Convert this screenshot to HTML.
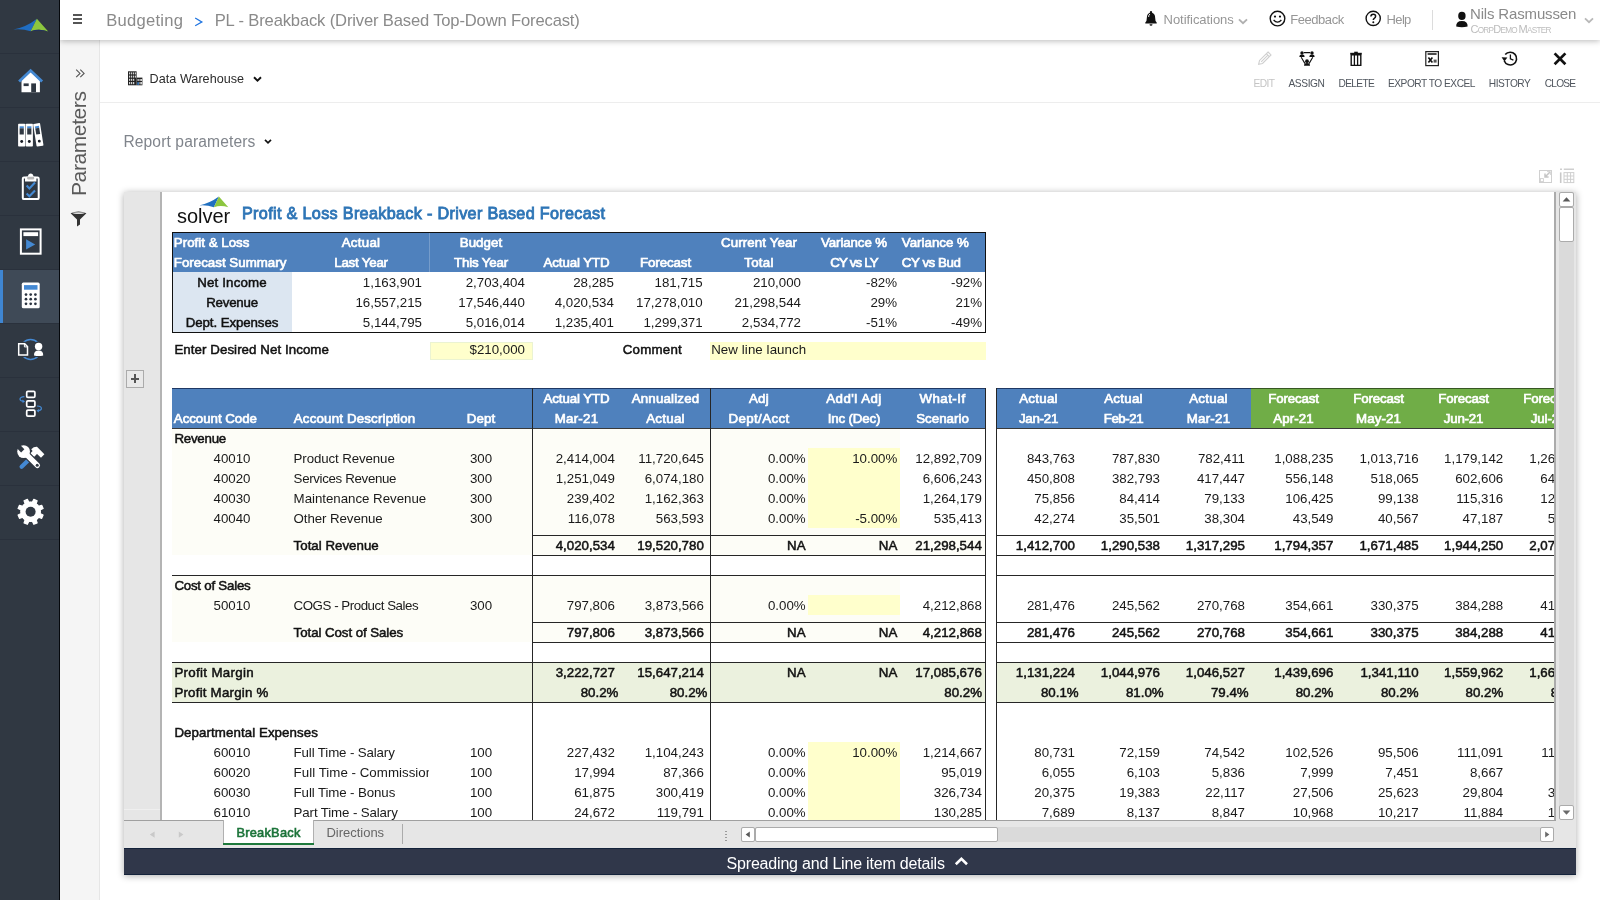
<!DOCTYPE html>
<html lang="en">
<head>
<meta charset="utf-8">
<title>PL - Breakback (Driver Based Top-Down Forecast)</title>
<style>
html,body{margin:0;padding:0;}
body{width:1600px;height:900px;overflow:hidden;background:#fff;position:relative;font-family:"Liberation Sans",sans-serif;}
div,svg,span{position:absolute;box-sizing:border-box;}
.t{white-space:nowrap;overflow:visible;}
#sheetclip{left:162px;top:192px;width:1392px;height:628px;overflow:hidden;background:#fff;}
#sheetin{left:-162px;top:-192px;width:1600px;height:900px;}
</style>
</head>
<body>
<div id="root" style="left:0;top:0;width:1600px;height:900px;will-change:transform">
<div style="left:60px;top:40px;width:40px;height:860px;background:#f5f5f5;border-right:1px solid #e6e6e6;"></div>
<svg style="left:74px;top:68px" width="12" height="11" viewBox="0 0 12 11"><path d="M2.2,1.6 L6,5.4 L2.2,9.2 M6.3,1.6 L10.1,5.4 L6.3,9.2" fill="none" stroke="#555" stroke-width="1.1"/></svg>
<div class="t" style="left:68px;top:195.6px;width:104px;height:22px;line-height:22px;font-size:21px;color:#5a5a5a;transform-origin:0 0;transform:rotate(-90deg);letter-spacing:-0.4px">Parameters</div>
<svg style="left:70px;top:211px" width="17" height="16" viewBox="0 0 17 16"><path d="M0.6,2.2 Q8.5,-1 16.4,2.2 L10,8.6 L10,13.4 L7,15.4 L7,8.6 Z" fill="#333"/><ellipse cx="8.5" cy="2.1" rx="6.2" ry="0.9" fill="#ddd"/></svg>
<svg style="left:127px;top:71px" width="16" height="15" viewBox="0 0 16 15"><rect x="1" y="0.3" width="8.6" height="14" fill="#222"/><rect x="9.6" y="6.6" width="5.8" height="7.7" fill="#222"/><g fill="#fff"><rect x="2.2" y="1.4" width="1" height="2"/><rect x="4.2" y="1.4" width="1" height="2"/><rect x="6.2" y="1.4" width="1" height="2"/><rect x="8.0" y="1.4" width="0.8" height="2"/><rect x="2.2" y="4.6" width="1" height="2"/><rect x="4.2" y="4.6" width="1" height="2"/><rect x="6.2" y="4.6" width="1" height="2"/><rect x="8.0" y="4.6" width="0.8" height="2"/><rect x="2.2" y="7.8" width="1" height="2"/><rect x="4.2" y="7.8" width="1" height="2"/><rect x="6.2" y="7.8" width="1" height="2"/><rect x="2.2" y="11" width="1" height="2.2"/><rect x="4.2" y="11" width="1" height="2.2"/><rect x="6.2" y="11" width="1" height="2.2"/><rect x="10.6" y="8" width="1" height="2"/><rect x="12.6" y="8" width="1" height="2"/><rect x="14" y="8" width="0.8" height="2"/><rect x="12.6" y="11" width="1" height="2.4"/><rect x="14" y="11" width="0.8" height="2.4"/></g><rect x="10.4" y="11.2" width="1.4" height="2.6" fill="#3b8be0"/></svg>
<div class="t" style="left:149.3px;top:69px;width:150.7px;height:20px;line-height:20px;font-size:12.6px;color:#2b2b2b;letter-spacing:0.037px;text-align:left;padding-left:0.3px;">Data Warehouse</div>
<svg style="left:252px;top:75px" width="11" height="8" viewBox="0 0 11 8"><path d="M2,2.2 L5.5,5.6 L9,2.2" fill="none" stroke="#111" stroke-width="1.9"/></svg>
<div style="left:100px;top:102px;width:1500px;height:1px;background:#ededed;"></div>
<div class="t" style="left:122.8px;top:131px;width:277.2px;height:22px;line-height:22px;font-size:15.6px;color:#80858c;letter-spacing:0.120px;text-align:left;padding-left:0.6px;">Report parameters</div>
<svg style="left:263px;top:138px" width="10" height="7" viewBox="0 0 10 7"><path d="M2,1.9 L5,4.8 L8,1.9" fill="none" stroke="#111" stroke-width="1.7"/></svg>
<svg style="left:1254px;top:49px" width="20" height="20" viewBox="0 0 20 20"><g transform="rotate(45 10 10)" fill="none" stroke="#cfcfcf" stroke-width="1.1"><path d="M7.9,2.2 h4.2 v12 l-2.1,3.4 l-2.1,-3.4 Z"/><path d="M7.9,4.6 h4.2 M10,4.8 V14"/></g></svg>
<div class="t" style="left:1204px;top:75px;width:120px;height:18px;line-height:18px;font-size:10.2px;color:#c4c4c4;letter-spacing:-0.533px;text-align:center;">EDIT</div>
<svg style="left:1296.5px;top:49px" width="20" height="20" viewBox="0 0 20 20"><g fill="#111"><circle cx="5" cy="4" r="1.7"/><path d="M2.4,8 q0,-2.4 2.6,-2.4 q2.6,0 2.6,2.4 Z"/><circle cx="15" cy="4" r="1.7"/><path d="M12.4,8 q0,-2.4 2.6,-2.4 q2.6,0 2.6,2.4 Z"/><circle cx="10" cy="12.2" r="1.9"/><path d="M7,16.8 q0,-2.8 3,-2.8 q3,0 3,2.8 Z"/></g><path d="M6.8,3.6 H13.2 M4.2,8.2 L8,14.6 M15.8,8.2 L12,14.6" stroke="#111" stroke-width="1.1" fill="none"/></svg>
<div class="t" style="left:1246.5px;top:75px;width:120.0px;height:18px;line-height:18px;font-size:10.2px;color:#50565e;letter-spacing:-0.407px;text-align:center;">ASSIGN</div>
<svg style="left:1346.3px;top:49px" width="20" height="20" viewBox="0 0 20 20"><g fill="none" stroke="#111"><path d="M5.2,5.8 h9.6 v10.6 h-9.6 Z" stroke-width="1.4"/><path d="M8.4,6 v10 M11.6,6 v10" stroke-width="1.3"/><path d="M4.2,4.6 h11.6" stroke-width="1.6"/><path d="M8.2,3.4 h3.6" stroke-width="1.4"/></g></svg>
<div class="t" style="left:1296.3px;top:75px;width:120.0px;height:18px;line-height:18px;font-size:10.2px;color:#50565e;letter-spacing:-0.680px;text-align:center;">DELETE</div>
<svg style="left:1421.5px;top:49px" width="20" height="20" viewBox="0 0 20 20"><rect x="3.8" y="2.6" width="12.6" height="14" fill="none" stroke="#222" stroke-width="1.2"/><path d="M5.6,5 h9" stroke="#111" stroke-width="1.5"/><path d="M6.4,8.6 l4,5 M10.4,8.6 l-4,5" stroke="#111" stroke-width="1.6"/><rect x="11.6" y="10.6" width="3" height="3" fill="#555"/></svg>
<div class="t" style="left:1371.5px;top:75px;width:120.0px;height:18px;line-height:18px;font-size:10.2px;color:#50565e;letter-spacing:-0.492px;text-align:center;">EXPORT TO EXCEL</div>
<svg style="left:1499.6px;top:49px" width="20" height="20" viewBox="0 0 20 20"><path d="M4.2,11.8 A6.4,6.4 0 1 0 5.2,5.6" fill="none" stroke="#111" stroke-width="1.6"/><path d="M1.6,8.2 L4.4,12.6 L7.4,8.6 Z" fill="#111"/><path d="M10.4,5.6 V9.8 L13.4,11.2" fill="none" stroke="#111" stroke-width="1.3"/></svg>
<div class="t" style="left:1449.6px;top:75px;width:120.0px;height:18px;line-height:18px;font-size:10.2px;color:#50565e;letter-spacing:-0.481px;text-align:center;">HISTORY</div>
<svg style="left:1550px;top:49px" width="20" height="20" viewBox="0 0 20 20"><path d="M4.6,4.4 L15.4,15.2 M15.4,4.4 L4.6,15.2" stroke="#111" stroke-width="2.7" fill="none"/></svg>
<div class="t" style="left:1500px;top:75px;width:120px;height:18px;line-height:18px;font-size:10.2px;color:#50565e;letter-spacing:-0.796px;text-align:center;">CLOSE</div>
<svg style="left:1538px;top:169px" width="16" height="15" viewBox="0 0 16 15"><rect x="1.5" y="1.5" width="12" height="12" fill="none" stroke="#d0d0d0" stroke-width="1"/><rect x="2.4" y="9.6" width="3" height="3" fill="none" stroke="#d0d0d0" stroke-width="0.9"/><path d="M6.8,8.2 L12,3 M7,4.6 V8 H10.6" stroke="#c6c6c6" stroke-width="1.5" fill="none"/><path d="M9,2.6 H12.4 V6" stroke="#d6d6d6" stroke-width="1" fill="none"/></svg>
<svg style="left:1559px;top:168px" width="17" height="16" viewBox="0 0 17 16"><path d="M1,1.3 h2 M4.8,1.3 h10.2" stroke="#cfcfcf" stroke-width="1.4"/><path d="M1.7,4.4 v10.6" stroke="#c8c8c8" stroke-width="1.6"/><g fill="none" stroke="#cfcfcf" stroke-width="1"><rect x="5" y="4.6" width="9.8" height="10"/><path d="M8.3,4.6 v10 M11.6,4.6 v10 M5,8 h9.8 M5,11.3 h9.8"/></g></svg>
<div style="left:124px;top:192px;width:1452px;height:683px;background:#e6e6e6;box-shadow:0 1px 7px rgba(0,0,0,0.33);"></div>
<div style="left:124px;top:192px;width:37px;height:628px;background:#e6e6e6;"></div>
<div style="left:160px;top:192px;width:2px;height:628px;background:#b4b4b4;"></div>
<div style="left:124px;top:809px;width:36px;height:1px;background:#efefef;"></div>
<div style="left:126px;top:370px;width:18px;height:18px;border:1px solid #ababab;background:#e9e9e9;"></div>
<div style="left:130.6px;top:378px;width:8.800000000000011px;height:1.6000000000000227px;background:#555;"></div>
<div style="left:134.2px;top:374.4px;width:1.6000000000000227px;height:8.800000000000011px;background:#555;"></div>
<div style="left:1554px;top:192px;width:2px;height:628px;background:#ababab;"></div>
<div style="left:1556px;top:192px;width:20px;height:656px;background:#e6e6e6;"></div>
<div style="left:1559px;top:192px;width:15px;height:614px;background:#dadada;"></div>
<div style="left:1559px;top:192px;width:15px;height:15px;background:#fff;border:1px solid #ababab;border-radius:2px;"></div>
<svg style="left:1559px;top:192px" width="15" height="15" viewBox="0 0 15 15"><path d="M3.6,9.4 L7.5,5.2 L11.4,9.4 Z" fill="#5a5a5a"/></svg>
<div style="left:1559px;top:207px;width:15px;height:35px;background:#fff;border:1px solid #ababab;border-radius:2px;"></div>
<div style="left:1559px;top:805px;width:15px;height:15px;background:#fff;border:1px solid #ababab;border-radius:2px;"></div>
<svg style="left:1559px;top:805px" width="15" height="15" viewBox="0 0 15 15"><path d="M3.6,5.6 L7.5,9.8 L11.4,5.6 Z" fill="#6a6a6a"/></svg>
<div style="left:124px;top:820px;width:1452px;height:28px;background:#e6e6e6;"></div>
<div style="left:124px;top:820px;width:99px;height:1px;background:#a0a0a0;"></div>
<div style="left:314px;top:820px;width:1242px;height:1px;background:#a0a0a0;"></div>
<svg style="left:148px;top:829px" width="40" height="12" viewBox="0 0 40 12"><path d="M6.6,2.4 V8.8 L1.8,5.6 Z M30.8,2.4 V8.8 L35.4,5.6 Z" fill="#c9c9c9"/></svg>
<div style="left:223px;top:820px;width:91px;height:25px;background:#ffffff;border-right:1px solid #b0b0b0;border-left:1px solid #b0b0b0;"></div>
<div style="left:223px;top:843px;width:91px;height:2px;background:#1e7a3c;"></div>
<div class="t" style="left:223px;top:822.5px;width:91px;height:20px;line-height:20px;font-size:12.8px;color:#1b7339;-webkit-text-stroke:0.6px #1b7339;letter-spacing:0.245px;text-align:center;">BreakBack</div>
<div class="t" style="left:314px;top:822.5px;width:86px;height:20px;line-height:20px;font-size:13px;color:#666;letter-spacing:-0.019px;text-align:left;padding-left:12.5px;">Directions</div>
<div style="left:402px;top:824px;width:1px;height:20px;background:#ababab;"></div>
<div style="left:725.4px;top:831px;width:1.3999999999999773px;height:1.2999999999999545px;background:#9a9a9a;"></div>
<div style="left:725.4px;top:834px;width:1.3999999999999773px;height:1.2999999999999545px;background:#9a9a9a;"></div>
<div style="left:725.4px;top:837px;width:1.3999999999999773px;height:1.2999999999999545px;background:#9a9a9a;"></div>
<div style="left:725.4px;top:840px;width:1.3999999999999773px;height:1.2999999999999545px;background:#9a9a9a;"></div>
<div style="left:741px;top:827px;width:813px;height:15px;background:#dadada;"></div>
<div style="left:741px;top:827px;width:14px;height:15px;background:#fff;border:1px solid #ababab;border-radius:2px;"></div>
<svg style="left:741px;top:827px" width="14" height="15" viewBox="0 0 14 15"><path d="M8.8,4.4 V10.6 L4.6,7.5 Z" fill="#5a5a5a"/></svg>
<div style="left:755px;top:827px;width:243px;height:15px;background:#fff;border:1px solid #ababab;border-radius:2px;"></div>
<div style="left:1540px;top:827px;width:14px;height:15px;background:#fff;border:1px solid #ababab;border-radius:2px;"></div>
<svg style="left:1540px;top:827px" width="14" height="15" viewBox="0 0 14 15"><path d="M5.2,4.4 V10.6 L9.4,7.5 Z" fill="#6a6a6a"/></svg>
<div style="left:124px;top:848px;width:1452px;height:27px;background:#30374a;border-top:1px solid #14233b;border-bottom:1px solid #14233b;"></div>
<div class="t" style="left:700px;top:853px;width:300px;height:22px;line-height:22px;font-size:16px;color:#ffffff;letter-spacing:-0.195px;text-align:left;padding-left:26.6px;">Spreading and Line item details</div>
<svg style="left:953px;top:855px" width="17" height="12" viewBox="0 0 17 12"><path d="M2.8,9.2 L8.4,3.8 L14,9.2" fill="none" stroke="#fff" stroke-width="2.6"/></svg>
<div style="left:60px;top:0;width:1540px;height:40px;background:#fff;box-shadow:0 1px 6px rgba(0,0,0,0.28);"></div>
<div style="left:72.6px;top:14.4px;width:9.800000000000011px;height:1.9000000000000004px;background:#555;"></div>
<div style="left:72.6px;top:18.1px;width:9.800000000000011px;height:1.8999999999999986px;background:#555;"></div>
<div style="left:72.6px;top:21.8px;width:9.800000000000011px;height:1.8999999999999986px;background:#555;"></div>
<div class="t" style="left:105.8px;top:9.4px;width:194.2px;height:24px;line-height:24px;font-size:16.6px;color:#8a8a8a;letter-spacing:0.260px;text-align:left;padding-left:0.4px;">Budgeting</div>
<svg style="left:193px;top:13px" width="14" height="14" viewBox="0 0 14 14"><path d="M2.2,5 L8.8,9 L2.2,12.8" fill="none" stroke="#1f74e0" stroke-width="1.3"/></svg>
<div class="t" style="left:214.3px;top:9.4px;width:485.7px;height:24px;line-height:24px;font-size:16.6px;color:#8a8a8a;letter-spacing:-0.162px;text-align:left;padding-left:0.4px;">PL - Breakback (Driver Based Top-Down Forecast)</div>
<svg style="left:1143px;top:10px" width="16" height="18" viewBox="0 0 16 18"><path d="M8,1 a1.1,1.1 0 0 1 1.1,1.1 v0.6 q3,1 3,4.6 q0,4 1.6,5.2 v0.9 H2.3 v-0.9 q1.6,-1.2 1.6,-5.2 q0,-3.6 3,-4.6 v-0.6 A1.1,1.1 0 0 1 8,1 Z M6.5,14.3 h3 a1.5,1.5 0 0 1 -3,0 Z" fill="#111"/><path d="M5.6,7 q0,-2.2 1.4,-3" stroke="#fff" stroke-width="0.9" fill="none"/></svg>
<div class="t" style="left:1163px;top:10px;width:137px;height:20px;line-height:20px;font-size:13px;color:#969696;letter-spacing:-0.054px;text-align:left;padding-left:0.6px;">Notifications</div>
<svg style="left:1237px;top:17px" width="12" height="9" viewBox="0 0 12 9"><path d="M2,2.4 L6,6.2 L10,2.4" fill="none" stroke="#b0b0b0" stroke-width="1.9"/></svg>
<svg style="left:1268px;top:9px" width="19" height="19" viewBox="0 0 19 19"><circle cx="9.5" cy="9.6" r="7.3" fill="none" stroke="#111" stroke-width="1.4"/><circle cx="7" cy="7.6" r="1.1" fill="#111"/><circle cx="12" cy="7.6" r="1.1" fill="#111"/><path d="M5.6,11 Q9.5,15.4 13.4,11" fill="none" stroke="#111" stroke-width="1.3"/></svg>
<div class="t" style="left:1289.6px;top:10px;width:110.40000000000009px;height:20px;line-height:20px;font-size:13px;color:#969696;letter-spacing:-0.436px;text-align:left;padding-left:0.6px;">Feedback</div>
<svg style="left:1364px;top:9px" width="19" height="19" viewBox="0 0 19 19"><circle cx="9.2" cy="9.4" r="7.1" fill="none" stroke="#111" stroke-width="1.4"/><path d="M6.9,7.6 q0,-2.4 2.4,-2.4 q2.3,0 2.3,2.1 q0,1.3 -1.3,2 q-1,0.6 -1,1.7" fill="none" stroke="#111" stroke-width="1.5"/><circle cx="9.3" cy="13.3" r="1" fill="#111"/></svg>
<div class="t" style="left:1386px;top:10px;width:54px;height:20px;line-height:20px;font-size:13px;color:#969696;letter-spacing:-0.659px;text-align:left;padding-left:0.6px;">Help</div>
<div style="left:1432px;top:10px;width:1px;height:20px;background:#dcdcdc;"></div>
<svg style="left:1455px;top:11px" width="14" height="17" viewBox="0 0 14 17"><ellipse cx="6.9" cy="4.9" rx="3.7" ry="4.1" fill="#111"/><path d="M1.2,15.6 q-0.4,-5.6 5.7,-5.6 q6.1,0 5.7,5.6 q-5.7,1.2 -11.4,0 Z" fill="#111"/></svg>
<div class="t" style="left:1470px;top:2px;width:130px;height:24px;line-height:24px;font-size:15px;color:#8a8a8a;letter-spacing:-0.162px;text-align:left;padding-left:0px;">Nils Rasmussen</div>
<div class="t" style="left:1470.4px;top:21px;height:16px;line-height:16px;font-size:8.2px;color:#bdbdbd;letter-spacing:-0.72px"><span style="position:static;font-size:11px">C</span>ORP<span style="position:static;font-size:11px">D</span>EMO <span style="position:static;font-size:11px">M</span>ASTER</div>
<svg style="left:1583px;top:16px" width="12" height="9" viewBox="0 0 12 9"><path d="M2,2.4 L6,6.2 L10,2.4" fill="none" stroke="#b8b8b8" stroke-width="1.8"/></svg>
<div style="left:0px;top:0px;width:60px;height:900px;background:#303842;border-right:1px solid #05080c;"></div>
<div style="left:0px;top:270px;width:59px;height:53px;background:#3f4a57;"></div>
<div style="left:0px;top:270px;width:3px;height:53px;background:#3f86d2;"></div>
<div style="left:0px;top:53px;width:59px;height:1px;background:#2a313c;"></div>
<div style="left:0px;top:107px;width:59px;height:1px;background:#2a313c;"></div>
<div style="left:0px;top:161px;width:59px;height:1px;background:#2a313c;"></div>
<div style="left:0px;top:215px;width:59px;height:1px;background:#2a313c;"></div>
<div style="left:0px;top:269px;width:59px;height:1px;background:#2a313c;"></div>
<div style="left:0px;top:323px;width:59px;height:1px;background:#2a313c;"></div>
<div style="left:0px;top:377px;width:59px;height:1px;background:#2a313c;"></div>
<div style="left:0px;top:431px;width:59px;height:1px;background:#2a313c;"></div>
<div style="left:0px;top:485px;width:59px;height:1px;background:#2a313c;"></div>
<div style="left:0px;top:539px;width:59px;height:1px;background:#2a313c;"></div>
<svg style="left:0;top:0" width="60" height="545" viewBox="0 0 60 545"><path d="M13.2,29.5 Q26.5,27 36.9,18.7 L30.6,31.3 Q22,28.4 13.2,29.5 Z" fill="#1f6dc2"/><path d="M36.9,18.7 L48.2,31.6 Q39.4,28.2 30.6,31.3 Z" fill="#8cc63f"/><path d="M30.6,31.3 Q39.4,28.2 48.2,31.6 Q39.4,29.6 30.6,31.3 Z" fill="#1b2f6b"/><path d="M21.5,80.4 L30.6,72 L39.9,80.4 V92.2 H21.5 Z" fill="#ffffff"/><path d="M19.1,81.6 L30.6,70.6 L42.1,81.6" fill="none" stroke="#4489d3" stroke-width="2.8" stroke-linecap="butt"/><rect x="31.2" y="83.4" width="4.8" height="8.8" fill="#303842"/><rect x="23.6" y="83.4" width="5.1" height="2.7" fill="#303842"/><g><rect x="18.1" y="123.7" width="7.2" height="22.8" rx="0.8" fill="#ffffff"/><rect x="19.6" y="126.3" width="4.2" height="2" fill="#4489d3"/><rect x="19.6" y="128.3" width="4.2" height="6.2" fill="#303842"/><circle cx="21.700000000000003" cy="141.5" r="1.45" fill="#151a22"/></g><g><rect x="25.7" y="123.7" width="7.2" height="22.8" rx="0.8" fill="#ffffff"/><rect x="27.2" y="126.3" width="4.2" height="2" fill="#4489d3"/><rect x="27.2" y="128.3" width="4.2" height="6.2" fill="#303842"/><circle cx="29.3" cy="141.5" r="1.45" fill="#151a22"/></g><g transform="rotate(-9 38.3 134.8)"><rect x="34.8" y="123.4" width="7.0" height="22.8" rx="0.8" fill="#ffffff"/><rect x="36.3" y="126.0" width="4.0" height="2" fill="#4489d3"/><rect x="36.3" y="128.0" width="4.0" height="6.2" fill="#303842"/><circle cx="38.3" cy="141.20000000000002" r="1.45" fill="#151a22"/></g><rect x="22.8" y="177.6" width="15.9" height="21.5" rx="1.2" fill="none" stroke="#ffffff" stroke-width="2"/><path d="M25,181.4 v-3.2 q0,-1.4 1.4,-1.4 h1.4 q0.6,-3.2 2.9,-3.2 q2.3,0 2.9,3.2 h1.4 q1.4,0 1.4,1.4 v3.2 Z" fill="#ffffff"/><rect x="27.2" y="176.8" width="7" height="2.6" rx="1.2" fill="#b8b8b8"/><path d="M26.6,185.6 L29.4,188.4 L35,182.6 M26.6,193.4 L29.4,196.2 L35,190.4" fill="none" stroke="#4489d3" stroke-width="2.1"/><rect x="20.9" y="229.4" width="19.7" height="24.3" fill="none" stroke="#ffffff" stroke-width="2"/><rect x="23.4" y="232.2" width="14.7" height="3.9" fill="#ffffff"/><path d="M26.1,239.2 V249.6 L35.2,244.4 Z" fill="#4489d3"/><rect x="21.8" y="282.6" width="17.9" height="25.7" rx="1.6" fill="#ffffff"/><rect x="24" y="285.1" width="13.5" height="4.6" fill="#4489d3"/><circle cx="26" cy="294.6" r="1.35" fill="#2a3340"/><circle cx="30.7" cy="294.6" r="1.35" fill="#2a3340"/><circle cx="35.4" cy="294.6" r="1.35" fill="#2a3340"/><circle cx="26" cy="299.2" r="1.35" fill="#2a3340"/><circle cx="30.7" cy="299.2" r="1.35" fill="#2a3340"/><circle cx="35.4" cy="299.2" r="1.35" fill="#2a3340"/><circle cx="26" cy="303.8" r="1.35" fill="#2a3340"/><circle cx="30.7" cy="303.8" r="1.35" fill="#2a3340"/><circle cx="35.4" cy="303.8" r="1.35" fill="#2a3340"/><circle cx="30.6" cy="349.5" r="10" fill="none" stroke="#4489d3" stroke-width="1.5"/><path d="M18,343 h7 l3.2,3.2 v9.6 h-10.2 Z" fill="#303842" stroke="#303842" stroke-width="2.4"/><path d="M18.7,343.7 h6 l2.8,2.8 v8.6 h-8.8 Z" fill="#303842" stroke="#ffffff" stroke-width="1.5"/><path d="M24.4,343.9 v3 h3" fill="none" stroke="#ffffff" stroke-width="1"/><circle cx="38.6" cy="346.4" r="5" fill="#303842"/><path d="M33,357 q0,-7 5.6,-7 q5.6,0 5.6,7 Z" fill="#303842"/><circle cx="38.6" cy="346.5" r="3.7" fill="#ffffff"/><path d="M34,355.6 q-0.2,-5 4.6,-5 q4.8,0 4.6,5 q-4.6,1 -9.2,0 Z" fill="#ffffff"/><rect x="26.7" y="391.4" width="8.2" height="6" rx="1.2" fill="none" stroke="#ffffff" stroke-width="1.7"/><rect x="28.8" y="393.59999999999997" width="4" height="1.6" fill="#20262f"/><rect x="26.7" y="400.8" width="8.2" height="6" rx="1.2" fill="none" stroke="#ffffff" stroke-width="1.7"/><rect x="28.8" y="403.0" width="4" height="1.6" fill="#20262f"/><rect x="26.7" y="410.2" width="8.2" height="6" rx="1.2" fill="none" stroke="#ffffff" stroke-width="1.7"/><rect x="28.8" y="412.4" width="4" height="1.6" fill="#20262f"/><path d="M24.4,396.6 q-4.6,0.4 -4.4,2.6 q0.2,1.8 3,2" fill="none" stroke="#4489d3" stroke-width="1.2"/><path d="M22.4,399.6 L25,401.4 L22.6,403 Z" fill="#4489d3"/><path d="M37,406 q4.6,0.4 4.4,2.6 q-0.2,1.8 -3,2" fill="none" stroke="#4489d3" stroke-width="1.2"/><path d="M39,409 L36.4,410.8 L38.8,412.4 Z" fill="#4489d3"/><path d="M21.6,466.8 L29.6,459" stroke="#4489d3" stroke-width="4.2" stroke-linecap="round" fill="none"/><path d="M33.2,455.6 L36.2,452.4" stroke="#ffffff" stroke-width="3" fill="none"/><path d="M31.2,449.2 q2.6,-2.6 5.8,-2.4 l7.4,7.4 l-3.4,3.6 l-4.2,-4 l-3.2,3 l-3.4,-3.4 l2.4,-2.4 Z" fill="#ffffff"/><path d="M24.6,452.6 L37.4,465.4" stroke="#303842" stroke-width="7.6" stroke-linecap="round" fill="none"/><path d="M24.6,452.6 L37.4,465.4" stroke="#ffffff" stroke-width="5.2" stroke-linecap="round" fill="none"/><circle cx="23.6" cy="451.6" r="6.4" fill="#ffffff"/><rect x="-2.3" y="-9.5" width="4.6" height="8.3" fill="#303842" transform="translate(23.6,451.6) rotate(-45)"/><circle cx="37.2" cy="465.2" r="1.5" fill="#303842"/><polygon points="32.34,502.36 33.83,499.31 37.15,500.69 36.04,503.89 38.51,506.36 41.71,505.25 43.09,508.57 40.04,510.06 40.04,513.54 43.09,515.03 41.71,518.35 38.51,517.24 36.04,519.71 37.15,522.91 33.83,524.29 32.34,521.24 28.86,521.24 27.37,524.29 24.05,522.91 25.16,519.71 22.69,517.24 19.49,518.35 18.11,515.03 21.16,513.54 21.16,510.06 18.11,508.57 19.49,505.25 22.69,506.36 25.16,503.89 24.05,500.69 27.37,499.31 28.86,502.36" fill="#ffffff" stroke="#ffffff" stroke-width="1.2" stroke-linejoin="round"/><circle cx="30.6" cy="511.8" r="10.3" fill="#ffffff"/><circle cx="30.6" cy="511.8" r="5" fill="#303842"/></svg>
<div id="sheetclip"><div id="sheetin">
<svg style="left:176px;top:194px" width="60" height="34" viewBox="176 194 60 34"><path d="M199.2,205.4 Q210,203.2 218.9,196.6 L213.9,207.2 Q207,204.8 199.2,205.4 Z" fill="#1f6fc0"/><path d="M218.9,196.6 L228.3,207.3 Q221,204.6 213.9,207.2 Z" fill="#8cc63f"/></svg>
<div class="t" style="left:177px;top:203.5px;width:63px;height:24px;line-height:24px;font-size:20px;color:#111;letter-spacing:-0.042px;text-align:left;padding-left:0px;">solver</div>
<div class="t" style="left:242px;top:201px;width:458px;height:24px;line-height:24px;font-size:16.2px;color:#2e75b6;-webkit-text-stroke:0.85px #2e75b6;letter-spacing:0.323px;text-align:left;padding-left:0px;">Profit &amp; Loss Breakback - Driver Based Forecast</div>
<div style="left:172px;top:232px;width:814px;height:40px;background:#4f81bd;"></div>
<div style="left:173px;top:272px;width:119px;height:60px;background:#dce6f1;"></div>
<div style="left:429px;top:233px;width:1px;height:39px;background:rgba(255,255,255,0.22);"></div>
<div class="t" style="left:172px;top:233px;width:120px;height:20px;line-height:20px;font-size:13.3px;color:#ffffff;-webkit-text-stroke:0.68px #ffffff;letter-spacing:0.016px;text-align:left;padding-left:1.8px;">Profit &amp; Loss</div>
<div class="t" style="left:292px;top:233px;width:138px;height:20px;line-height:20px;font-size:13.3px;color:#ffffff;-webkit-text-stroke:0.68px #ffffff;letter-spacing:0.273px;text-align:center;">Actual</div>
<div class="t" style="left:430px;top:233px;width:102px;height:20px;line-height:20px;font-size:13.3px;color:#ffffff;-webkit-text-stroke:0.68px #ffffff;letter-spacing:0.074px;text-align:center;">Budget</div>
<div class="t" style="left:710px;top:233px;width:98px;height:20px;line-height:20px;font-size:13.3px;color:#ffffff;-webkit-text-stroke:0.68px #ffffff;letter-spacing:0.119px;text-align:center;">Current Year</div>
<div class="t" style="left:808px;top:233px;width:92px;height:20px;line-height:20px;font-size:13.3px;color:#ffffff;-webkit-text-stroke:0.68px #ffffff;letter-spacing:-0.093px;text-align:center;">Variance %</div>
<div class="t" style="left:900px;top:233px;width:85px;height:20px;line-height:20px;font-size:13.3px;color:#ffffff;-webkit-text-stroke:0.68px #ffffff;letter-spacing:0.007px;text-align:left;padding-left:1.8px;">Variance %</div>
<div class="t" style="left:172px;top:253px;width:120px;height:20px;line-height:20px;font-size:13.3px;color:#ffffff;-webkit-text-stroke:0.68px #ffffff;letter-spacing:0.017px;text-align:left;padding-left:1.8px;">Forecast Summary</div>
<div class="t" style="left:292px;top:253px;width:138px;height:20px;line-height:20px;font-size:13.3px;color:#ffffff;-webkit-text-stroke:0.68px #ffffff;letter-spacing:-0.207px;text-align:center;">Last Year</div>
<div class="t" style="left:430px;top:253px;width:102px;height:20px;line-height:20px;font-size:13.3px;color:#ffffff;-webkit-text-stroke:0.68px #ffffff;letter-spacing:-0.150px;text-align:center;">This Year</div>
<div class="t" style="left:532px;top:253px;width:89px;height:20px;line-height:20px;font-size:13.3px;color:#ffffff;-webkit-text-stroke:0.68px #ffffff;letter-spacing:-0.092px;text-align:center;">Actual YTD</div>
<div class="t" style="left:621px;top:253px;width:89px;height:20px;line-height:20px;font-size:13.3px;color:#ffffff;-webkit-text-stroke:0.68px #ffffff;letter-spacing:-0.080px;text-align:center;">Forecast</div>
<div class="t" style="left:710px;top:253px;width:98px;height:20px;line-height:20px;font-size:13.3px;color:#ffffff;-webkit-text-stroke:0.68px #ffffff;letter-spacing:0.301px;text-align:center;">Total</div>
<div class="t" style="left:808px;top:253px;width:92px;height:20px;line-height:20px;font-size:13.3px;color:#ffffff;-webkit-text-stroke:0.68px #ffffff;letter-spacing:-0.826px;text-align:center;">CY vs LY</div>
<div class="t" style="left:900px;top:253px;width:85px;height:20px;line-height:20px;font-size:13.3px;color:#ffffff;-webkit-text-stroke:0.68px #ffffff;letter-spacing:-0.443px;text-align:left;padding-left:1.8px;">CY vs Bud</div>
<div class="t" style="left:172px;top:273px;width:120px;height:20px;line-height:20px;font-size:13.3px;color:#111;-webkit-text-stroke:0.5px #111;letter-spacing:0.159px;text-align:center;">Net Income</div>
<div class="t" style="left:292px;top:273px;width:138px;height:20px;line-height:20px;font-size:13.3px;color:#1a1a1a;text-align:right;padding-right:8.000px;">1,163,901</div>
<div class="t" style="left:430px;top:273px;width:102px;height:20px;line-height:20px;font-size:13.3px;color:#1a1a1a;text-align:right;padding-right:7.200px;">2,703,404</div>
<div class="t" style="left:532px;top:273px;width:89px;height:20px;line-height:20px;font-size:13.3px;color:#1a1a1a;text-align:right;padding-right:7.200px;">28,285</div>
<div class="t" style="left:621px;top:273px;width:89px;height:20px;line-height:20px;font-size:13.3px;color:#1a1a1a;text-align:right;padding-right:7.400px;">181,715</div>
<div class="t" style="left:710px;top:273px;width:98px;height:20px;line-height:20px;font-size:13.3px;color:#1a1a1a;text-align:right;padding-right:7.000px;">210,000</div>
<div class="t" style="left:808px;top:273px;width:92px;height:20px;line-height:20px;font-size:13.3px;color:#1a1a1a;text-align:right;padding-right:3.000px;">-82%</div>
<div class="t" style="left:900px;top:273px;width:85px;height:20px;line-height:20px;font-size:13.3px;color:#1a1a1a;text-align:right;padding-right:3.000px;">-92%</div>
<div class="t" style="left:172px;top:293px;width:120px;height:20px;line-height:20px;font-size:13.3px;color:#111;-webkit-text-stroke:0.5px #111;letter-spacing:-0.234px;text-align:center;">Revenue</div>
<div class="t" style="left:292px;top:293px;width:138px;height:20px;line-height:20px;font-size:13.3px;color:#1a1a1a;text-align:right;padding-right:8.000px;">16,557,215</div>
<div class="t" style="left:430px;top:293px;width:102px;height:20px;line-height:20px;font-size:13.3px;color:#1a1a1a;text-align:right;padding-right:7.200px;">17,546,440</div>
<div class="t" style="left:532px;top:293px;width:89px;height:20px;line-height:20px;font-size:13.3px;color:#1a1a1a;text-align:right;padding-right:7.200px;">4,020,534</div>
<div class="t" style="left:621px;top:293px;width:89px;height:20px;line-height:20px;font-size:13.3px;color:#1a1a1a;text-align:right;padding-right:7.400px;">17,278,010</div>
<div class="t" style="left:710px;top:293px;width:98px;height:20px;line-height:20px;font-size:13.3px;color:#1a1a1a;text-align:right;padding-right:7.000px;">21,298,544</div>
<div class="t" style="left:808px;top:293px;width:92px;height:20px;line-height:20px;font-size:13.3px;color:#1a1a1a;text-align:right;padding-right:3.000px;">29%</div>
<div class="t" style="left:900px;top:293px;width:85px;height:20px;line-height:20px;font-size:13.3px;color:#1a1a1a;text-align:right;padding-right:3.000px;">21%</div>
<div class="t" style="left:172px;top:313px;width:120px;height:20px;line-height:20px;font-size:13.3px;color:#111;-webkit-text-stroke:0.5px #111;letter-spacing:-0.092px;text-align:center;">Dept. Expenses</div>
<div class="t" style="left:292px;top:313px;width:138px;height:20px;line-height:20px;font-size:13.3px;color:#1a1a1a;text-align:right;padding-right:8.000px;">5,144,795</div>
<div class="t" style="left:430px;top:313px;width:102px;height:20px;line-height:20px;font-size:13.3px;color:#1a1a1a;text-align:right;padding-right:7.200px;">5,016,014</div>
<div class="t" style="left:532px;top:313px;width:89px;height:20px;line-height:20px;font-size:13.3px;color:#1a1a1a;text-align:right;padding-right:7.200px;">1,235,401</div>
<div class="t" style="left:621px;top:313px;width:89px;height:20px;line-height:20px;font-size:13.3px;color:#1a1a1a;text-align:right;padding-right:7.400px;">1,299,371</div>
<div class="t" style="left:710px;top:313px;width:98px;height:20px;line-height:20px;font-size:13.3px;color:#1a1a1a;text-align:right;padding-right:7.000px;">2,534,772</div>
<div class="t" style="left:808px;top:313px;width:92px;height:20px;line-height:20px;font-size:13.3px;color:#1a1a1a;text-align:right;padding-right:3.000px;">-51%</div>
<div class="t" style="left:900px;top:313px;width:85px;height:20px;line-height:20px;font-size:13.3px;color:#1a1a1a;text-align:right;padding-right:3.000px;">-49%</div>
<div style="left:172px;top:232px;width:814px;height:1px;background:#111;"></div>
<div style="left:172px;top:332px;width:814px;height:1px;background:#111;"></div>
<div style="left:172px;top:232px;width:1px;height:101px;background:#111;"></div>
<div style="left:985px;top:232px;width:1px;height:101px;background:#111;"></div>
<div class="t" style="left:172px;top:340px;width:258px;height:20px;line-height:20px;font-size:13.3px;color:#111;-webkit-text-stroke:0.5px #111;letter-spacing:0.066px;text-align:left;padding-left:2.4px;">Enter Desired Net Income</div>
<div style="left:430px;top:342px;width:103px;height:18px;background:#ffffcc;box-shadow:inset 0 0 0 1px rgba(190,215,225,0.3);"></div>
<div class="t" style="left:430px;top:340px;width:102px;height:20px;line-height:20px;font-size:13.3px;color:#1a1a1a;text-align:right;padding-right:7.000px;">$210,000</div>
<div class="t" style="left:621px;top:340px;width:89px;height:20px;line-height:20px;font-size:13.3px;color:#111;-webkit-text-stroke:0.5px #111;letter-spacing:0.207px;text-align:left;padding-left:1.8px;">Comment</div>
<div style="left:710px;top:342px;width:276px;height:18px;background:#ffffcc;"></div>
<div class="t" style="left:710px;top:340px;width:275px;height:20px;line-height:20px;font-size:13.3px;color:#1a1a1a;letter-spacing:0.081px;text-align:left;padding-left:1.2px;">New line launch</div>
<div style="left:172px;top:388px;width:814px;height:40px;background:#4f81bd;"></div>
<div style="left:996px;top:388px;width:255px;height:40px;background:#4f81bd;"></div>
<div style="left:1251px;top:388px;width:349px;height:40px;background:#70ad47;"></div>
<div style="left:172px;top:428px;width:728px;height:127px;background:#fdfdf7;"></div>
<div style="left:172px;top:575px;width:728px;height:67px;background:#fdfdf7;"></div>
<div style="left:900px;top:535px;width:86px;height:20px;background:#fdfdf7;"></div>
<div style="left:900px;top:622px;width:86px;height:20px;background:#fdfdf7;"></div>
<div style="left:172px;top:662px;width:814px;height:40px;background:#ebf1de;"></div>
<div style="left:996px;top:662px;width:604px;height:40px;background:#ebf1de;"></div>
<div style="left:808px;top:448px;width:92px;height:80px;background:#ffffcc;"></div>
<div style="left:808px;top:595px;width:92px;height:20px;background:#ffffcc;"></div>
<div style="left:808px;top:742px;width:92px;height:88px;background:#ffffcc;"></div>
<div class="t" style="left:532px;top:389px;width:89px;height:20px;line-height:20px;font-size:13.3px;color:#ffffff;-webkit-text-stroke:0.68px #ffffff;letter-spacing:-0.092px;text-align:center;">Actual YTD</div>
<div class="t" style="left:621px;top:389px;width:89px;height:20px;line-height:20px;font-size:13.3px;color:#ffffff;-webkit-text-stroke:0.68px #ffffff;letter-spacing:0.179px;text-align:center;">Annualized</div>
<div class="t" style="left:710px;top:389px;width:98px;height:20px;line-height:20px;font-size:13.3px;color:#ffffff;-webkit-text-stroke:0.68px #ffffff;letter-spacing:0.292px;text-align:center;">Adj</div>
<div class="t" style="left:808px;top:389px;width:92px;height:20px;line-height:20px;font-size:13.3px;color:#ffffff;-webkit-text-stroke:0.68px #ffffff;letter-spacing:0.473px;text-align:center;">Add&#x27;l Adj</div>
<div class="t" style="left:900px;top:389px;width:85px;height:20px;line-height:20px;font-size:13.3px;color:#ffffff;-webkit-text-stroke:0.68px #ffffff;letter-spacing:0.463px;text-align:center;">What-If</div>
<div class="t" style="left:996px;top:389px;width:85px;height:20px;line-height:20px;font-size:13.3px;color:#ffffff;-webkit-text-stroke:0.68px #ffffff;letter-spacing:0.273px;text-align:center;">Actual</div>
<div class="t" style="left:1081px;top:389px;width:85px;height:20px;line-height:20px;font-size:13.3px;color:#ffffff;-webkit-text-stroke:0.68px #ffffff;letter-spacing:0.273px;text-align:center;">Actual</div>
<div class="t" style="left:1166px;top:389px;width:85px;height:20px;line-height:20px;font-size:13.3px;color:#ffffff;-webkit-text-stroke:0.68px #ffffff;letter-spacing:0.273px;text-align:center;">Actual</div>
<div class="t" style="left:1251px;top:389px;width:85px;height:20px;line-height:20px;font-size:13.3px;color:#ffffff;-webkit-text-stroke:0.68px #ffffff;letter-spacing:-0.142px;text-align:center;">Forecast</div>
<div class="t" style="left:1336px;top:389px;width:85px;height:20px;line-height:20px;font-size:13.3px;color:#ffffff;-webkit-text-stroke:0.68px #ffffff;letter-spacing:-0.142px;text-align:center;">Forecast</div>
<div class="t" style="left:1421px;top:389px;width:85px;height:20px;line-height:20px;font-size:13.3px;color:#ffffff;-webkit-text-stroke:0.68px #ffffff;letter-spacing:-0.142px;text-align:center;">Forecast</div>
<div class="t" style="left:1506px;top:389px;width:85px;height:20px;line-height:20px;font-size:13.3px;color:#ffffff;-webkit-text-stroke:0.68px #ffffff;letter-spacing:-0.142px;text-align:center;">Forecast</div>
<div class="t" style="left:172px;top:409px;width:120px;height:20px;line-height:20px;font-size:13.3px;color:#ffffff;-webkit-text-stroke:0.68px #ffffff;letter-spacing:-0.037px;text-align:left;padding-left:1.8px;">Account Code</div>
<div class="t" style="left:292px;top:409px;width:138px;height:20px;line-height:20px;font-size:13.3px;color:#ffffff;-webkit-text-stroke:0.68px #ffffff;letter-spacing:0.175px;text-align:left;padding-left:1.8px;">Account Description</div>
<div class="t" style="left:430px;top:409px;width:102px;height:20px;line-height:20px;font-size:13.3px;color:#ffffff;-webkit-text-stroke:0.68px #ffffff;letter-spacing:0.127px;text-align:center;">Dept</div>
<div class="t" style="left:532px;top:409px;width:89px;height:20px;line-height:20px;font-size:13.3px;color:#ffffff;-webkit-text-stroke:0.68px #ffffff;letter-spacing:0.245px;text-align:center;">Mar-21</div>
<div class="t" style="left:621px;top:409px;width:89px;height:20px;line-height:20px;font-size:13.3px;color:#ffffff;-webkit-text-stroke:0.68px #ffffff;letter-spacing:0.273px;text-align:center;">Actual</div>
<div class="t" style="left:710px;top:409px;width:98px;height:20px;line-height:20px;font-size:13.3px;color:#ffffff;-webkit-text-stroke:0.68px #ffffff;letter-spacing:0.383px;text-align:center;">Dept/Acct</div>
<div class="t" style="left:808px;top:409px;width:92px;height:20px;line-height:20px;font-size:13.3px;color:#ffffff;-webkit-text-stroke:0.68px #ffffff;letter-spacing:-0.150px;text-align:center;">Inc (Dec)</div>
<div class="t" style="left:900px;top:409px;width:85px;height:20px;line-height:20px;font-size:13.3px;color:#ffffff;-webkit-text-stroke:0.68px #ffffff;letter-spacing:0.013px;text-align:center;">Scenario</div>
<div class="t" style="left:996px;top:409px;width:85px;height:20px;line-height:20px;font-size:13.3px;color:#ffffff;-webkit-text-stroke:0.68px #ffffff;letter-spacing:-0.261px;text-align:center;">Jan-21</div>
<div class="t" style="left:1081px;top:409px;width:85px;height:20px;line-height:20px;font-size:13.3px;color:#ffffff;-webkit-text-stroke:0.68px #ffffff;letter-spacing:-0.423px;text-align:center;">Feb-21</div>
<div class="t" style="left:1166px;top:409px;width:85px;height:20px;line-height:20px;font-size:13.3px;color:#ffffff;-webkit-text-stroke:0.68px #ffffff;letter-spacing:0.245px;text-align:center;">Mar-21</div>
<div class="t" style="left:1251px;top:409px;width:85px;height:20px;line-height:20px;font-size:13.3px;color:#ffffff;-webkit-text-stroke:0.68px #ffffff;letter-spacing:0.113px;text-align:center;">Apr-21</div>
<div class="t" style="left:1336px;top:409px;width:85px;height:20px;line-height:20px;font-size:13.3px;color:#ffffff;-webkit-text-stroke:0.68px #ffffff;letter-spacing:0.125px;text-align:center;">May-21</div>
<div class="t" style="left:1421px;top:409px;width:85px;height:20px;line-height:20px;font-size:13.3px;color:#ffffff;-webkit-text-stroke:0.68px #ffffff;letter-spacing:-0.178px;text-align:center;">Jun-21</div>
<div class="t" style="left:1506px;top:409px;width:85px;height:20px;line-height:20px;font-size:13.3px;color:#ffffff;-webkit-text-stroke:0.68px #ffffff;letter-spacing:-0.104px;text-align:center;">Jul-21</div>
<div class="t" style="left:172px;top:429px;width:258px;height:20px;line-height:20px;font-size:13.3px;color:#111;-webkit-text-stroke:0.5px #111;letter-spacing:-0.234px;text-align:left;padding-left:2.4px;">Revenue</div>
<div class="t" style="left:172px;top:449px;width:120px;height:20px;line-height:20px;font-size:13.3px;color:#1a1a1a;text-align:center;">40010</div>
<div style="left:292px;top:448px;width:137px;height:20px;overflow:hidden">
<div class="t" style="left:0px;top:1px;width:300px;height:20px;line-height:20px;font-size:13.3px;color:#1a1a1a;letter-spacing:-0.111px;text-align:left;padding-left:1.6px;">Product Revenue</div>
</div>
<div class="t" style="left:430px;top:449px;width:102px;height:20px;line-height:20px;font-size:13.3px;color:#1a1a1a;text-align:center;">300</div>
<div class="t" style="left:532px;top:449px;width:89px;height:20px;line-height:20px;font-size:13.3px;color:#1a1a1a;text-align:right;padding-right:6.200px;">2,414,004</div>
<div class="t" style="left:621px;top:449px;width:89px;height:20px;line-height:20px;font-size:13.3px;color:#1a1a1a;text-align:right;padding-right:6.200px;">11,720,645</div>
<div class="t" style="left:710px;top:449px;width:98px;height:20px;line-height:20px;font-size:13.3px;color:#1a1a1a;text-align:right;padding-right:2.400px;">0.00%</div>
<div class="t" style="left:808px;top:449px;width:92px;height:20px;line-height:20px;font-size:13.3px;color:#1a1a1a;text-align:right;padding-right:2.700px;">10.00%</div>
<div class="t" style="left:900px;top:449px;width:85px;height:20px;line-height:20px;font-size:13.3px;color:#1a1a1a;text-align:right;padding-right:3.200px;">12,892,709</div>
<div class="t" style="left:996px;top:449px;width:85px;height:20px;line-height:20px;font-size:13.3px;color:#1a1a1a;text-align:right;padding-right:6.000px;">843,763</div>
<div class="t" style="left:1081px;top:449px;width:85px;height:20px;line-height:20px;font-size:13.3px;color:#1a1a1a;text-align:right;padding-right:6.000px;">787,830</div>
<div class="t" style="left:1166px;top:449px;width:85px;height:20px;line-height:20px;font-size:13.3px;color:#1a1a1a;text-align:right;padding-right:6.000px;">782,411</div>
<div class="t" style="left:1251px;top:449px;width:85px;height:20px;line-height:20px;font-size:13.3px;color:#1a1a1a;text-align:right;padding-right:2.600px;">1,088,235</div>
<div class="t" style="left:1336px;top:449px;width:85px;height:20px;line-height:20px;font-size:13.3px;color:#1a1a1a;text-align:right;padding-right:2.400px;">1,013,716</div>
<div class="t" style="left:1421px;top:449px;width:85px;height:20px;line-height:20px;font-size:13.3px;color:#1a1a1a;text-align:right;padding-right:2.800px;">1,179,142</div>
<div class="t" style="left:1506px;top:449px;width:85px;height:20px;line-height:20px;font-size:13.3px;color:#1a1a1a;text-align:right;padding-right:2.600px;">1,267,578</div>
<div class="t" style="left:172px;top:469px;width:120px;height:20px;line-height:20px;font-size:13.3px;color:#1a1a1a;text-align:center;">40020</div>
<div style="left:292px;top:468px;width:137px;height:20px;overflow:hidden">
<div class="t" style="left:0px;top:1px;width:300px;height:20px;line-height:20px;font-size:13.3px;color:#1a1a1a;letter-spacing:-0.333px;text-align:left;padding-left:1.6px;">Services Revenue</div>
</div>
<div class="t" style="left:430px;top:469px;width:102px;height:20px;line-height:20px;font-size:13.3px;color:#1a1a1a;text-align:center;">300</div>
<div class="t" style="left:532px;top:469px;width:89px;height:20px;line-height:20px;font-size:13.3px;color:#1a1a1a;text-align:right;padding-right:6.200px;">1,251,049</div>
<div class="t" style="left:621px;top:469px;width:89px;height:20px;line-height:20px;font-size:13.3px;color:#1a1a1a;text-align:right;padding-right:6.200px;">6,074,180</div>
<div class="t" style="left:710px;top:469px;width:98px;height:20px;line-height:20px;font-size:13.3px;color:#1a1a1a;text-align:right;padding-right:2.400px;">0.00%</div>
<div class="t" style="left:900px;top:469px;width:85px;height:20px;line-height:20px;font-size:13.3px;color:#1a1a1a;text-align:right;padding-right:3.200px;">6,606,243</div>
<div class="t" style="left:996px;top:469px;width:85px;height:20px;line-height:20px;font-size:13.3px;color:#1a1a1a;text-align:right;padding-right:6.000px;">450,808</div>
<div class="t" style="left:1081px;top:469px;width:85px;height:20px;line-height:20px;font-size:13.3px;color:#1a1a1a;text-align:right;padding-right:6.000px;">382,793</div>
<div class="t" style="left:1166px;top:469px;width:85px;height:20px;line-height:20px;font-size:13.3px;color:#1a1a1a;text-align:right;padding-right:6.000px;">417,447</div>
<div class="t" style="left:1251px;top:469px;width:85px;height:20px;line-height:20px;font-size:13.3px;color:#1a1a1a;text-align:right;padding-right:2.600px;">556,148</div>
<div class="t" style="left:1336px;top:469px;width:85px;height:20px;line-height:20px;font-size:13.3px;color:#1a1a1a;text-align:right;padding-right:2.400px;">518,065</div>
<div class="t" style="left:1421px;top:469px;width:85px;height:20px;line-height:20px;font-size:13.3px;color:#1a1a1a;text-align:right;padding-right:2.800px;">602,606</div>
<div class="t" style="left:1506px;top:469px;width:85px;height:20px;line-height:20px;font-size:13.3px;color:#1a1a1a;text-align:right;padding-right:2.600px;">647,801</div>
<div class="t" style="left:172px;top:489px;width:120px;height:20px;line-height:20px;font-size:13.3px;color:#1a1a1a;text-align:center;">40030</div>
<div style="left:292px;top:488px;width:137px;height:20px;overflow:hidden">
<div class="t" style="left:0px;top:1px;width:300px;height:20px;line-height:20px;font-size:13.3px;color:#1a1a1a;letter-spacing:-0.026px;text-align:left;padding-left:1.6px;">Maintenance Revenue</div>
</div>
<div class="t" style="left:430px;top:489px;width:102px;height:20px;line-height:20px;font-size:13.3px;color:#1a1a1a;text-align:center;">300</div>
<div class="t" style="left:532px;top:489px;width:89px;height:20px;line-height:20px;font-size:13.3px;color:#1a1a1a;text-align:right;padding-right:6.200px;">239,402</div>
<div class="t" style="left:621px;top:489px;width:89px;height:20px;line-height:20px;font-size:13.3px;color:#1a1a1a;text-align:right;padding-right:6.200px;">1,162,363</div>
<div class="t" style="left:710px;top:489px;width:98px;height:20px;line-height:20px;font-size:13.3px;color:#1a1a1a;text-align:right;padding-right:2.400px;">0.00%</div>
<div class="t" style="left:900px;top:489px;width:85px;height:20px;line-height:20px;font-size:13.3px;color:#1a1a1a;text-align:right;padding-right:3.200px;">1,264,179</div>
<div class="t" style="left:996px;top:489px;width:85px;height:20px;line-height:20px;font-size:13.3px;color:#1a1a1a;text-align:right;padding-right:6.000px;">75,856</div>
<div class="t" style="left:1081px;top:489px;width:85px;height:20px;line-height:20px;font-size:13.3px;color:#1a1a1a;text-align:right;padding-right:6.000px;">84,414</div>
<div class="t" style="left:1166px;top:489px;width:85px;height:20px;line-height:20px;font-size:13.3px;color:#1a1a1a;text-align:right;padding-right:6.000px;">79,133</div>
<div class="t" style="left:1251px;top:489px;width:85px;height:20px;line-height:20px;font-size:13.3px;color:#1a1a1a;text-align:right;padding-right:2.600px;">106,425</div>
<div class="t" style="left:1336px;top:489px;width:85px;height:20px;line-height:20px;font-size:13.3px;color:#1a1a1a;text-align:right;padding-right:2.400px;">99,138</div>
<div class="t" style="left:1421px;top:489px;width:85px;height:20px;line-height:20px;font-size:13.3px;color:#1a1a1a;text-align:right;padding-right:2.800px;">115,316</div>
<div class="t" style="left:1506px;top:489px;width:85px;height:20px;line-height:20px;font-size:13.3px;color:#1a1a1a;text-align:right;padding-right:2.600px;">123,964</div>
<div class="t" style="left:172px;top:509px;width:120px;height:20px;line-height:20px;font-size:13.3px;color:#1a1a1a;text-align:center;">40040</div>
<div style="left:292px;top:508px;width:137px;height:20px;overflow:hidden">
<div class="t" style="left:0px;top:1px;width:300px;height:20px;line-height:20px;font-size:13.3px;color:#1a1a1a;letter-spacing:-0.084px;text-align:left;padding-left:1.6px;">Other Revenue</div>
</div>
<div class="t" style="left:430px;top:509px;width:102px;height:20px;line-height:20px;font-size:13.3px;color:#1a1a1a;text-align:center;">300</div>
<div class="t" style="left:532px;top:509px;width:89px;height:20px;line-height:20px;font-size:13.3px;color:#1a1a1a;text-align:right;padding-right:6.200px;">116,078</div>
<div class="t" style="left:621px;top:509px;width:89px;height:20px;line-height:20px;font-size:13.3px;color:#1a1a1a;text-align:right;padding-right:6.200px;">563,593</div>
<div class="t" style="left:710px;top:509px;width:98px;height:20px;line-height:20px;font-size:13.3px;color:#1a1a1a;text-align:right;padding-right:2.400px;">0.00%</div>
<div class="t" style="left:808px;top:509px;width:92px;height:20px;line-height:20px;font-size:13.3px;color:#1a1a1a;text-align:right;padding-right:2.700px;">-5.00%</div>
<div class="t" style="left:900px;top:509px;width:85px;height:20px;line-height:20px;font-size:13.3px;color:#1a1a1a;text-align:right;padding-right:3.200px;">535,413</div>
<div class="t" style="left:996px;top:509px;width:85px;height:20px;line-height:20px;font-size:13.3px;color:#1a1a1a;text-align:right;padding-right:6.000px;">42,274</div>
<div class="t" style="left:1081px;top:509px;width:85px;height:20px;line-height:20px;font-size:13.3px;color:#1a1a1a;text-align:right;padding-right:6.000px;">35,501</div>
<div class="t" style="left:1166px;top:509px;width:85px;height:20px;line-height:20px;font-size:13.3px;color:#1a1a1a;text-align:right;padding-right:6.000px;">38,304</div>
<div class="t" style="left:1251px;top:509px;width:85px;height:20px;line-height:20px;font-size:13.3px;color:#1a1a1a;text-align:right;padding-right:2.600px;">43,549</div>
<div class="t" style="left:1336px;top:509px;width:85px;height:20px;line-height:20px;font-size:13.3px;color:#1a1a1a;text-align:right;padding-right:2.400px;">40,567</div>
<div class="t" style="left:1421px;top:509px;width:85px;height:20px;line-height:20px;font-size:13.3px;color:#1a1a1a;text-align:right;padding-right:2.800px;">47,187</div>
<div class="t" style="left:1506px;top:509px;width:85px;height:20px;line-height:20px;font-size:13.3px;color:#1a1a1a;text-align:right;padding-right:2.600px;">50,726</div>
<div class="t" style="left:292px;top:536px;width:240px;height:20px;line-height:20px;font-size:13.3px;color:#111;-webkit-text-stroke:0.5px #111;letter-spacing:0.006px;text-align:left;padding-left:1.6px;">Total Revenue</div>
<div class="t" style="left:532px;top:536px;width:89px;height:20px;line-height:20px;font-size:13.3px;color:#111;-webkit-text-stroke:0.5px #111;text-align:right;padding-right:6.200px;">4,020,534</div>
<div class="t" style="left:621px;top:536px;width:89px;height:20px;line-height:20px;font-size:13.3px;color:#111;-webkit-text-stroke:0.5px #111;text-align:right;padding-right:6.200px;">19,520,780</div>
<div class="t" style="left:710px;top:536px;width:98px;height:20px;line-height:20px;font-size:13.3px;color:#111;-webkit-text-stroke:0.5px #111;letter-spacing:0.150px;text-align:right;padding-right:2.250px;">NA</div>
<div class="t" style="left:808px;top:536px;width:92px;height:20px;line-height:20px;font-size:13.3px;color:#111;-webkit-text-stroke:0.5px #111;letter-spacing:0.150px;text-align:right;padding-right:2.550px;">NA</div>
<div class="t" style="left:900px;top:536px;width:85px;height:20px;line-height:20px;font-size:13.3px;color:#111;-webkit-text-stroke:0.5px #111;text-align:right;padding-right:3.200px;">21,298,544</div>
<div class="t" style="left:996px;top:536px;width:85px;height:20px;line-height:20px;font-size:13.3px;color:#111;-webkit-text-stroke:0.5px #111;text-align:right;padding-right:6.000px;">1,412,700</div>
<div class="t" style="left:1081px;top:536px;width:85px;height:20px;line-height:20px;font-size:13.3px;color:#111;-webkit-text-stroke:0.5px #111;text-align:right;padding-right:6.000px;">1,290,538</div>
<div class="t" style="left:1166px;top:536px;width:85px;height:20px;line-height:20px;font-size:13.3px;color:#111;-webkit-text-stroke:0.5px #111;text-align:right;padding-right:6.000px;">1,317,295</div>
<div class="t" style="left:1251px;top:536px;width:85px;height:20px;line-height:20px;font-size:13.3px;color:#111;-webkit-text-stroke:0.5px #111;text-align:right;padding-right:2.600px;">1,794,357</div>
<div class="t" style="left:1336px;top:536px;width:85px;height:20px;line-height:20px;font-size:13.3px;color:#111;-webkit-text-stroke:0.5px #111;text-align:right;padding-right:2.400px;">1,671,485</div>
<div class="t" style="left:1421px;top:536px;width:85px;height:20px;line-height:20px;font-size:13.3px;color:#111;-webkit-text-stroke:0.5px #111;text-align:right;padding-right:2.800px;">1,944,250</div>
<div class="t" style="left:1506px;top:536px;width:85px;height:20px;line-height:20px;font-size:13.3px;color:#111;-webkit-text-stroke:0.5px #111;text-align:right;padding-right:2.600px;">2,070,069</div>
<div class="t" style="left:172px;top:576px;width:258px;height:20px;line-height:20px;font-size:13.3px;color:#111;-webkit-text-stroke:0.5px #111;letter-spacing:-0.231px;text-align:left;padding-left:2.4px;">Cost of Sales</div>
<div class="t" style="left:172px;top:596px;width:120px;height:20px;line-height:20px;font-size:13.3px;color:#1a1a1a;text-align:center;">50010</div>
<div style="left:292px;top:595px;width:137px;height:20px;overflow:hidden">
<div class="t" style="left:0px;top:1px;width:300px;height:20px;line-height:20px;font-size:13.3px;color:#1a1a1a;letter-spacing:-0.459px;text-align:left;padding-left:1.6px;">COGS - Product Sales</div>
</div>
<div class="t" style="left:430px;top:596px;width:102px;height:20px;line-height:20px;font-size:13.3px;color:#1a1a1a;text-align:center;">300</div>
<div class="t" style="left:532px;top:596px;width:89px;height:20px;line-height:20px;font-size:13.3px;color:#1a1a1a;text-align:right;padding-right:6.200px;">797,806</div>
<div class="t" style="left:621px;top:596px;width:89px;height:20px;line-height:20px;font-size:13.3px;color:#1a1a1a;text-align:right;padding-right:6.200px;">3,873,566</div>
<div class="t" style="left:710px;top:596px;width:98px;height:20px;line-height:20px;font-size:13.3px;color:#1a1a1a;text-align:right;padding-right:2.400px;">0.00%</div>
<div class="t" style="left:900px;top:596px;width:85px;height:20px;line-height:20px;font-size:13.3px;color:#1a1a1a;text-align:right;padding-right:3.200px;">4,212,868</div>
<div class="t" style="left:996px;top:596px;width:85px;height:20px;line-height:20px;font-size:13.3px;color:#1a1a1a;text-align:right;padding-right:6.000px;">281,476</div>
<div class="t" style="left:1081px;top:596px;width:85px;height:20px;line-height:20px;font-size:13.3px;color:#1a1a1a;text-align:right;padding-right:6.000px;">245,562</div>
<div class="t" style="left:1166px;top:596px;width:85px;height:20px;line-height:20px;font-size:13.3px;color:#1a1a1a;text-align:right;padding-right:6.000px;">270,768</div>
<div class="t" style="left:1251px;top:596px;width:85px;height:20px;line-height:20px;font-size:13.3px;color:#1a1a1a;text-align:right;padding-right:2.600px;">354,661</div>
<div class="t" style="left:1336px;top:596px;width:85px;height:20px;line-height:20px;font-size:13.3px;color:#1a1a1a;text-align:right;padding-right:2.400px;">330,375</div>
<div class="t" style="left:1421px;top:596px;width:85px;height:20px;line-height:20px;font-size:13.3px;color:#1a1a1a;text-align:right;padding-right:2.800px;">384,288</div>
<div class="t" style="left:1506px;top:596px;width:85px;height:20px;line-height:20px;font-size:13.3px;color:#1a1a1a;text-align:right;padding-right:2.600px;">413,107</div>
<div class="t" style="left:292px;top:623px;width:240px;height:20px;line-height:20px;font-size:13.3px;color:#111;-webkit-text-stroke:0.5px #111;letter-spacing:-0.068px;text-align:left;padding-left:1.6px;">Total Cost of Sales</div>
<div class="t" style="left:532px;top:623px;width:89px;height:20px;line-height:20px;font-size:13.3px;color:#111;-webkit-text-stroke:0.5px #111;text-align:right;padding-right:6.200px;">797,806</div>
<div class="t" style="left:621px;top:623px;width:89px;height:20px;line-height:20px;font-size:13.3px;color:#111;-webkit-text-stroke:0.5px #111;text-align:right;padding-right:6.200px;">3,873,566</div>
<div class="t" style="left:710px;top:623px;width:98px;height:20px;line-height:20px;font-size:13.3px;color:#111;-webkit-text-stroke:0.5px #111;letter-spacing:0.150px;text-align:right;padding-right:2.250px;">NA</div>
<div class="t" style="left:808px;top:623px;width:92px;height:20px;line-height:20px;font-size:13.3px;color:#111;-webkit-text-stroke:0.5px #111;letter-spacing:0.150px;text-align:right;padding-right:2.550px;">NA</div>
<div class="t" style="left:900px;top:623px;width:85px;height:20px;line-height:20px;font-size:13.3px;color:#111;-webkit-text-stroke:0.5px #111;text-align:right;padding-right:3.200px;">4,212,868</div>
<div class="t" style="left:996px;top:623px;width:85px;height:20px;line-height:20px;font-size:13.3px;color:#111;-webkit-text-stroke:0.5px #111;text-align:right;padding-right:6.000px;">281,476</div>
<div class="t" style="left:1081px;top:623px;width:85px;height:20px;line-height:20px;font-size:13.3px;color:#111;-webkit-text-stroke:0.5px #111;text-align:right;padding-right:6.000px;">245,562</div>
<div class="t" style="left:1166px;top:623px;width:85px;height:20px;line-height:20px;font-size:13.3px;color:#111;-webkit-text-stroke:0.5px #111;text-align:right;padding-right:6.000px;">270,768</div>
<div class="t" style="left:1251px;top:623px;width:85px;height:20px;line-height:20px;font-size:13.3px;color:#111;-webkit-text-stroke:0.5px #111;text-align:right;padding-right:2.600px;">354,661</div>
<div class="t" style="left:1336px;top:623px;width:85px;height:20px;line-height:20px;font-size:13.3px;color:#111;-webkit-text-stroke:0.5px #111;text-align:right;padding-right:2.400px;">330,375</div>
<div class="t" style="left:1421px;top:623px;width:85px;height:20px;line-height:20px;font-size:13.3px;color:#111;-webkit-text-stroke:0.5px #111;text-align:right;padding-right:2.800px;">384,288</div>
<div class="t" style="left:1506px;top:623px;width:85px;height:20px;line-height:20px;font-size:13.3px;color:#111;-webkit-text-stroke:0.5px #111;text-align:right;padding-right:2.600px;">413,107</div>
<div class="t" style="left:172px;top:663px;width:258px;height:20px;line-height:20px;font-size:13.3px;color:#111;-webkit-text-stroke:0.5px #111;letter-spacing:0.324px;text-align:left;padding-left:2.4px;">Profit Margin</div>
<div class="t" style="left:532px;top:663px;width:89px;height:20px;line-height:20px;font-size:13.3px;color:#111;-webkit-text-stroke:0.5px #111;text-align:right;padding-right:6.200px;">3,222,727</div>
<div class="t" style="left:621px;top:663px;width:89px;height:20px;line-height:20px;font-size:13.3px;color:#111;-webkit-text-stroke:0.5px #111;text-align:right;padding-right:6.200px;">15,647,214</div>
<div class="t" style="left:710px;top:663px;width:98px;height:20px;line-height:20px;font-size:13.3px;color:#111;-webkit-text-stroke:0.5px #111;letter-spacing:0.150px;text-align:right;padding-right:2.250px;">NA</div>
<div class="t" style="left:808px;top:663px;width:92px;height:20px;line-height:20px;font-size:13.3px;color:#111;-webkit-text-stroke:0.5px #111;letter-spacing:0.150px;text-align:right;padding-right:2.550px;">NA</div>
<div class="t" style="left:900px;top:663px;width:85px;height:20px;line-height:20px;font-size:13.3px;color:#111;-webkit-text-stroke:0.5px #111;text-align:right;padding-right:3.200px;">17,085,676</div>
<div class="t" style="left:996px;top:663px;width:85px;height:20px;line-height:20px;font-size:13.3px;color:#111;-webkit-text-stroke:0.5px #111;text-align:right;padding-right:6.000px;">1,131,224</div>
<div class="t" style="left:1081px;top:663px;width:85px;height:20px;line-height:20px;font-size:13.3px;color:#111;-webkit-text-stroke:0.5px #111;text-align:right;padding-right:6.000px;">1,044,976</div>
<div class="t" style="left:1166px;top:663px;width:85px;height:20px;line-height:20px;font-size:13.3px;color:#111;-webkit-text-stroke:0.5px #111;text-align:right;padding-right:6.000px;">1,046,527</div>
<div class="t" style="left:1251px;top:663px;width:85px;height:20px;line-height:20px;font-size:13.3px;color:#111;-webkit-text-stroke:0.5px #111;text-align:right;padding-right:2.600px;">1,439,696</div>
<div class="t" style="left:1336px;top:663px;width:85px;height:20px;line-height:20px;font-size:13.3px;color:#111;-webkit-text-stroke:0.5px #111;text-align:right;padding-right:2.400px;">1,341,110</div>
<div class="t" style="left:1421px;top:663px;width:85px;height:20px;line-height:20px;font-size:13.3px;color:#111;-webkit-text-stroke:0.5px #111;text-align:right;padding-right:2.800px;">1,559,962</div>
<div class="t" style="left:1506px;top:663px;width:85px;height:20px;line-height:20px;font-size:13.3px;color:#111;-webkit-text-stroke:0.5px #111;text-align:right;padding-right:2.600px;">1,660,962</div>
<div class="t" style="left:172px;top:683px;width:258px;height:20px;line-height:20px;font-size:13.3px;color:#111;-webkit-text-stroke:0.5px #111;letter-spacing:0.213px;text-align:left;padding-left:2.4px;">Profit Margin %</div>
<div class="t" style="left:532px;top:683px;width:89px;height:20px;line-height:20px;font-size:13.3px;color:#111;-webkit-text-stroke:0.5px #111;text-align:right;padding-right:2.600px;">80.2%</div>
<div class="t" style="left:621px;top:683px;width:89px;height:20px;line-height:20px;font-size:13.3px;color:#111;-webkit-text-stroke:0.5px #111;text-align:right;padding-right:2.600px;">80.2%</div>
<div class="t" style="left:900px;top:683px;width:85px;height:20px;line-height:20px;font-size:13.3px;color:#111;-webkit-text-stroke:0.5px #111;text-align:right;padding-right:3.000px;">80.2%</div>
<div class="t" style="left:996px;top:683px;width:85px;height:20px;line-height:20px;font-size:13.3px;color:#111;-webkit-text-stroke:0.5px #111;text-align:right;padding-right:2.400px;">80.1%</div>
<div class="t" style="left:1081px;top:683px;width:85px;height:20px;line-height:20px;font-size:13.3px;color:#111;-webkit-text-stroke:0.5px #111;text-align:right;padding-right:2.400px;">81.0%</div>
<div class="t" style="left:1166px;top:683px;width:85px;height:20px;line-height:20px;font-size:13.3px;color:#111;-webkit-text-stroke:0.5px #111;text-align:right;padding-right:2.400px;">79.4%</div>
<div class="t" style="left:1251px;top:683px;width:85px;height:20px;line-height:20px;font-size:13.3px;color:#111;-webkit-text-stroke:0.5px #111;text-align:right;padding-right:2.600px;">80.2%</div>
<div class="t" style="left:1336px;top:683px;width:85px;height:20px;line-height:20px;font-size:13.3px;color:#111;-webkit-text-stroke:0.5px #111;text-align:right;padding-right:2.400px;">80.2%</div>
<div class="t" style="left:1421px;top:683px;width:85px;height:20px;line-height:20px;font-size:13.3px;color:#111;-webkit-text-stroke:0.5px #111;text-align:right;padding-right:2.800px;">80.2%</div>
<div class="t" style="left:1506px;top:683px;width:85px;height:20px;line-height:20px;font-size:13.3px;color:#111;-webkit-text-stroke:0.5px #111;text-align:right;padding-right:2.600px;">80.2%</div>
<div class="t" style="left:172px;top:723px;width:258px;height:20px;line-height:20px;font-size:13.3px;color:#111;-webkit-text-stroke:0.5px #111;letter-spacing:0.079px;text-align:left;padding-left:2.4px;">Departmental Expenses</div>
<div class="t" style="left:172px;top:743px;width:120px;height:20px;line-height:20px;font-size:13.3px;color:#1a1a1a;text-align:center;">60010</div>
<div style="left:292px;top:742px;width:137px;height:20px;overflow:hidden">
<div class="t" style="left:0px;top:1px;width:300px;height:20px;line-height:20px;font-size:13.3px;color:#1a1a1a;letter-spacing:-0.131px;text-align:left;padding-left:1.6px;">Full Time - Salary</div>
</div>
<div class="t" style="left:430px;top:743px;width:102px;height:20px;line-height:20px;font-size:13.3px;color:#1a1a1a;text-align:center;">100</div>
<div class="t" style="left:532px;top:743px;width:89px;height:20px;line-height:20px;font-size:13.3px;color:#1a1a1a;text-align:right;padding-right:6.200px;">227,432</div>
<div class="t" style="left:621px;top:743px;width:89px;height:20px;line-height:20px;font-size:13.3px;color:#1a1a1a;text-align:right;padding-right:6.200px;">1,104,243</div>
<div class="t" style="left:710px;top:743px;width:98px;height:20px;line-height:20px;font-size:13.3px;color:#1a1a1a;text-align:right;padding-right:2.400px;">0.00%</div>
<div class="t" style="left:808px;top:743px;width:92px;height:20px;line-height:20px;font-size:13.3px;color:#1a1a1a;text-align:right;padding-right:2.700px;">10.00%</div>
<div class="t" style="left:900px;top:743px;width:85px;height:20px;line-height:20px;font-size:13.3px;color:#1a1a1a;text-align:right;padding-right:3.200px;">1,214,667</div>
<div class="t" style="left:996px;top:743px;width:85px;height:20px;line-height:20px;font-size:13.3px;color:#1a1a1a;text-align:right;padding-right:6.000px;">80,731</div>
<div class="t" style="left:1081px;top:743px;width:85px;height:20px;line-height:20px;font-size:13.3px;color:#1a1a1a;text-align:right;padding-right:6.000px;">72,159</div>
<div class="t" style="left:1166px;top:743px;width:85px;height:20px;line-height:20px;font-size:13.3px;color:#1a1a1a;text-align:right;padding-right:6.000px;">74,542</div>
<div class="t" style="left:1251px;top:743px;width:85px;height:20px;line-height:20px;font-size:13.3px;color:#1a1a1a;text-align:right;padding-right:2.600px;">102,526</div>
<div class="t" style="left:1336px;top:743px;width:85px;height:20px;line-height:20px;font-size:13.3px;color:#1a1a1a;text-align:right;padding-right:2.400px;">95,506</div>
<div class="t" style="left:1421px;top:743px;width:85px;height:20px;line-height:20px;font-size:13.3px;color:#1a1a1a;text-align:right;padding-right:2.800px;">111,091</div>
<div class="t" style="left:1506px;top:743px;width:85px;height:20px;line-height:20px;font-size:13.3px;color:#1a1a1a;text-align:right;padding-right:2.600px;">119,422</div>
<div class="t" style="left:172px;top:763px;width:120px;height:20px;line-height:20px;font-size:13.3px;color:#1a1a1a;text-align:center;">60020</div>
<div style="left:292px;top:762px;width:137px;height:20px;overflow:hidden">
<div class="t" style="left:0px;top:1px;width:300px;height:20px;line-height:20px;font-size:13.3px;color:#1a1a1a;letter-spacing:0.031px;text-align:left;padding-left:1.6px;">Full Time - Commission</div>
</div>
<div class="t" style="left:430px;top:763px;width:102px;height:20px;line-height:20px;font-size:13.3px;color:#1a1a1a;text-align:center;">100</div>
<div class="t" style="left:532px;top:763px;width:89px;height:20px;line-height:20px;font-size:13.3px;color:#1a1a1a;text-align:right;padding-right:6.200px;">17,994</div>
<div class="t" style="left:621px;top:763px;width:89px;height:20px;line-height:20px;font-size:13.3px;color:#1a1a1a;text-align:right;padding-right:6.200px;">87,366</div>
<div class="t" style="left:710px;top:763px;width:98px;height:20px;line-height:20px;font-size:13.3px;color:#1a1a1a;text-align:right;padding-right:2.400px;">0.00%</div>
<div class="t" style="left:900px;top:763px;width:85px;height:20px;line-height:20px;font-size:13.3px;color:#1a1a1a;text-align:right;padding-right:3.200px;">95,019</div>
<div class="t" style="left:996px;top:763px;width:85px;height:20px;line-height:20px;font-size:13.3px;color:#1a1a1a;text-align:right;padding-right:6.000px;">6,055</div>
<div class="t" style="left:1081px;top:763px;width:85px;height:20px;line-height:20px;font-size:13.3px;color:#1a1a1a;text-align:right;padding-right:6.000px;">6,103</div>
<div class="t" style="left:1166px;top:763px;width:85px;height:20px;line-height:20px;font-size:13.3px;color:#1a1a1a;text-align:right;padding-right:6.000px;">5,836</div>
<div class="t" style="left:1251px;top:763px;width:85px;height:20px;line-height:20px;font-size:13.3px;color:#1a1a1a;text-align:right;padding-right:2.600px;">7,999</div>
<div class="t" style="left:1336px;top:763px;width:85px;height:20px;line-height:20px;font-size:13.3px;color:#1a1a1a;text-align:right;padding-right:2.400px;">7,451</div>
<div class="t" style="left:1421px;top:763px;width:85px;height:20px;line-height:20px;font-size:13.3px;color:#1a1a1a;text-align:right;padding-right:2.800px;">8,667</div>
<div class="t" style="left:1506px;top:763px;width:85px;height:20px;line-height:20px;font-size:13.3px;color:#1a1a1a;text-align:right;padding-right:2.600px;">9,317</div>
<div class="t" style="left:172px;top:783px;width:120px;height:20px;line-height:20px;font-size:13.3px;color:#1a1a1a;text-align:center;">60030</div>
<div style="left:292px;top:782px;width:137px;height:20px;overflow:hidden">
<div class="t" style="left:0px;top:1px;width:300px;height:20px;line-height:20px;font-size:13.3px;color:#1a1a1a;letter-spacing:-0.110px;text-align:left;padding-left:1.6px;">Full Time - Bonus</div>
</div>
<div class="t" style="left:430px;top:783px;width:102px;height:20px;line-height:20px;font-size:13.3px;color:#1a1a1a;text-align:center;">100</div>
<div class="t" style="left:532px;top:783px;width:89px;height:20px;line-height:20px;font-size:13.3px;color:#1a1a1a;text-align:right;padding-right:6.200px;">61,875</div>
<div class="t" style="left:621px;top:783px;width:89px;height:20px;line-height:20px;font-size:13.3px;color:#1a1a1a;text-align:right;padding-right:6.200px;">300,419</div>
<div class="t" style="left:710px;top:783px;width:98px;height:20px;line-height:20px;font-size:13.3px;color:#1a1a1a;text-align:right;padding-right:2.400px;">0.00%</div>
<div class="t" style="left:900px;top:783px;width:85px;height:20px;line-height:20px;font-size:13.3px;color:#1a1a1a;text-align:right;padding-right:3.200px;">326,734</div>
<div class="t" style="left:996px;top:783px;width:85px;height:20px;line-height:20px;font-size:13.3px;color:#1a1a1a;text-align:right;padding-right:6.000px;">20,375</div>
<div class="t" style="left:1081px;top:783px;width:85px;height:20px;line-height:20px;font-size:13.3px;color:#1a1a1a;text-align:right;padding-right:6.000px;">19,383</div>
<div class="t" style="left:1166px;top:783px;width:85px;height:20px;line-height:20px;font-size:13.3px;color:#1a1a1a;text-align:right;padding-right:6.000px;">22,117</div>
<div class="t" style="left:1251px;top:783px;width:85px;height:20px;line-height:20px;font-size:13.3px;color:#1a1a1a;text-align:right;padding-right:2.600px;">27,506</div>
<div class="t" style="left:1336px;top:783px;width:85px;height:20px;line-height:20px;font-size:13.3px;color:#1a1a1a;text-align:right;padding-right:2.400px;">25,623</div>
<div class="t" style="left:1421px;top:783px;width:85px;height:20px;line-height:20px;font-size:13.3px;color:#1a1a1a;text-align:right;padding-right:2.800px;">29,804</div>
<div class="t" style="left:1506px;top:783px;width:85px;height:20px;line-height:20px;font-size:13.3px;color:#1a1a1a;text-align:right;padding-right:2.600px;">32,039</div>
<div class="t" style="left:172px;top:803px;width:120px;height:20px;line-height:20px;font-size:13.3px;color:#1a1a1a;text-align:center;">61010</div>
<div style="left:292px;top:802px;width:137px;height:20px;overflow:hidden">
<div class="t" style="left:0px;top:1px;width:300px;height:20px;line-height:20px;font-size:13.3px;color:#1a1a1a;letter-spacing:-0.129px;text-align:left;padding-left:1.6px;">Part Time - Salary</div>
</div>
<div class="t" style="left:430px;top:803px;width:102px;height:20px;line-height:20px;font-size:13.3px;color:#1a1a1a;text-align:center;">100</div>
<div class="t" style="left:532px;top:803px;width:89px;height:20px;line-height:20px;font-size:13.3px;color:#1a1a1a;text-align:right;padding-right:6.200px;">24,672</div>
<div class="t" style="left:621px;top:803px;width:89px;height:20px;line-height:20px;font-size:13.3px;color:#1a1a1a;text-align:right;padding-right:6.200px;">119,791</div>
<div class="t" style="left:710px;top:803px;width:98px;height:20px;line-height:20px;font-size:13.3px;color:#1a1a1a;text-align:right;padding-right:2.400px;">0.00%</div>
<div class="t" style="left:900px;top:803px;width:85px;height:20px;line-height:20px;font-size:13.3px;color:#1a1a1a;text-align:right;padding-right:3.200px;">130,285</div>
<div class="t" style="left:996px;top:803px;width:85px;height:20px;line-height:20px;font-size:13.3px;color:#1a1a1a;text-align:right;padding-right:6.000px;">7,689</div>
<div class="t" style="left:1081px;top:803px;width:85px;height:20px;line-height:20px;font-size:13.3px;color:#1a1a1a;text-align:right;padding-right:6.000px;">8,137</div>
<div class="t" style="left:1166px;top:803px;width:85px;height:20px;line-height:20px;font-size:13.3px;color:#1a1a1a;text-align:right;padding-right:6.000px;">8,847</div>
<div class="t" style="left:1251px;top:803px;width:85px;height:20px;line-height:20px;font-size:13.3px;color:#1a1a1a;text-align:right;padding-right:2.600px;">10,968</div>
<div class="t" style="left:1336px;top:803px;width:85px;height:20px;line-height:20px;font-size:13.3px;color:#1a1a1a;text-align:right;padding-right:2.400px;">10,217</div>
<div class="t" style="left:1421px;top:803px;width:85px;height:20px;line-height:20px;font-size:13.3px;color:#1a1a1a;text-align:right;padding-right:2.800px;">11,884</div>
<div class="t" style="left:1506px;top:803px;width:85px;height:20px;line-height:20px;font-size:13.3px;color:#1a1a1a;text-align:right;padding-right:2.600px;">12,775</div>
<div style="left:172px;top:388px;width:814px;height:1px;background:#1f3864;"></div>
<div style="left:996px;top:388px;width:604px;height:1px;background:#1f3864;"></div>
<div style="left:1251px;top:388px;width:349px;height:1px;background:#375623;"></div>
<div style="left:172px;top:428px;width:814px;height:1px;background:#3a3a3a;"></div>
<div style="left:996px;top:428px;width:604px;height:1px;background:#3a3a3a;"></div>
<div style="left:532px;top:535px;width:454px;height:1px;background:#262626;"></div>
<div style="left:996px;top:535px;width:604px;height:1px;background:#262626;"></div>
<div style="left:532px;top:555px;width:454px;height:1px;background:#262626;"></div>
<div style="left:996px;top:555px;width:604px;height:1px;background:#262626;"></div>
<div style="left:532px;top:622px;width:454px;height:1px;background:#262626;"></div>
<div style="left:996px;top:622px;width:604px;height:1px;background:#262626;"></div>
<div style="left:532px;top:642px;width:454px;height:1px;background:#262626;"></div>
<div style="left:996px;top:642px;width:604px;height:1px;background:#262626;"></div>
<div style="left:172px;top:575px;width:814px;height:1px;background:#262626;"></div>
<div style="left:996px;top:575px;width:604px;height:1px;background:#262626;"></div>
<div style="left:172px;top:662px;width:814px;height:1px;background:#262626;"></div>
<div style="left:996px;top:662px;width:604px;height:1px;background:#262626;"></div>
<div style="left:172px;top:702px;width:814px;height:1px;background:#262626;"></div>
<div style="left:996px;top:702px;width:604px;height:1px;background:#262626;"></div>
<div style="left:532px;top:388px;width:1px;height:442px;background:#262626;"></div>
<div style="left:710px;top:388px;width:1px;height:442px;background:#262626;"></div>
<div style="left:985px;top:388px;width:1px;height:442px;background:#262626;"></div>
<div style="left:996px;top:388px;width:1px;height:442px;background:#262626;"></div>
</div></div>
</div>
</body>
</html>
